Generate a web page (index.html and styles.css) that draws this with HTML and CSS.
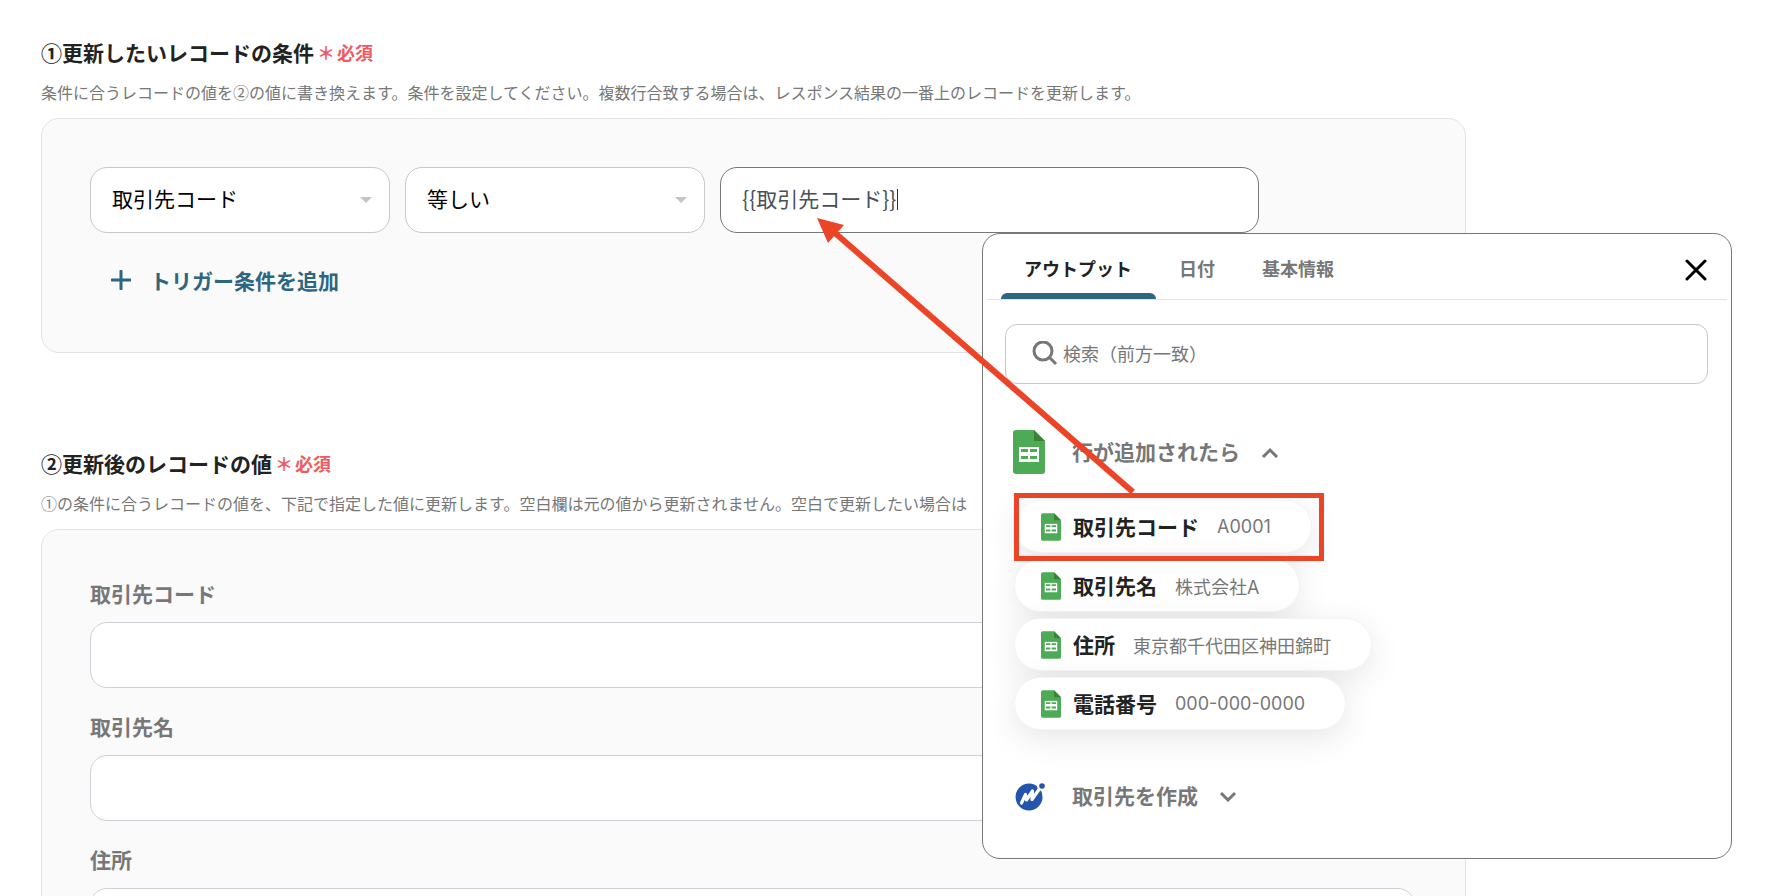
FILE: index.html
```
<!DOCTYPE html>
<html lang="ja">
<head>
  <meta charset="UTF-8">
  <title>レコードを更新する</title>
  <link rel="stylesheet" href="styles.css">
</head>
<body>

  <svg class="symbols" aria-hidden="true">
    <symbol id="sheet" viewBox="0 0 32 44">
      <path d="M3 0h18l11 11v30a3 3 0 0 1-3 3H3a3 3 0 0 1-3-3V3a3 3 0 0 1 3-3z" fill="#4eab55"/>
      <path d="M21 0l11 11H21z" fill="#3b8239"/>
      <path d="M6 17h20v15H6z" fill="#fff"/>
      <path d="M8 19h7v3H8zM17 19h7v3h-7zM8 26h7v3H8zM17 26h7v3h-7z" fill="#4eab55"/>
    </symbol>
  </svg>

  <main class="page">
    <section class="section">
      <h2>①更新したいレコードの条件<span class="required"><span>＊</span>必須</span></h2>
      <p class="description">条件に合うレコードの値を②の値に書き換えます。条件を設定してください。複数行合致する場合は、レスポンス結果の一番上のレコードを更新します。</p>
      <div class="panel">
        <div class="condition">
          <div class="select">
            <select aria-label="項目">
              <option>取引先コード</option>
            </select>
          </div>
          <div class="select">
            <select aria-label="条件">
              <option>等しい</option>
            </select>
          </div>
          <div class="value">
            <input type="text" aria-label="値" value="{{取引先コード}}">
            <span class="caret"></span>

            <div class="popup">
              <div class="tabs">
                <button type="button" class="tab active">アウトプット</button>
                <button type="button" class="tab">日付</button>
                <button type="button" class="tab">基本情報</button>
                <button type="button" class="close" aria-label="閉じる">
                  <svg width="22" height="22" viewBox="0 0 22 22"><path d="M2 2l18 18M20 2L2 20" stroke="#000" stroke-width="3" stroke-linecap="round"/></svg>
                </button>
              </div>

              <label class="search">
                <svg width="26" height="26" viewBox="0 0 26 26" fill="none" stroke="#777" stroke-width="3"><circle cx="11" cy="10" r="9"/><path d="M17 16l7 7"/></svg>
                <input type="text" aria-label="検索" placeholder="検索（前方一致）">
              </label>

              <button type="button" class="group">
                <svg class="group-icon" width="32" height="44"><use href="#sheet"/></svg>
                <span>行が追加されたら</span>
                <svg width="18" height="12" viewBox="0 0 18 12" fill="none" stroke="#777" stroke-width="3"><path d="M2 11l7-7 7 7"/></svg>
              </button>

              <div class="chips">
                <button type="button" class="chip"><svg width="20" height="28"><use href="#sheet"/></svg><b>取引先コード</b><span>A0001</span></button>
                <button type="button" class="chip"><svg width="20" height="28"><use href="#sheet"/></svg><b>取引先名</b><span>株式会社A</span></button>
                <button type="button" class="chip"><svg width="20" height="28"><use href="#sheet"/></svg><b>住所</b><span>東京都千代田区神田錦町</span></button>
                <button type="button" class="chip"><svg width="20" height="28"><use href="#sheet"/></svg><b>電話番号</b><span>000-000-0000</span></button>
              </div>

              <button type="button" class="group">
                <svg class="group-icon" width="32" height="30" viewBox="0 0 32 30">
                  <circle cx="16" cy="16" r="13.5" fill="#2355ad"/>
                  <circle cx="29" cy="5" r="5" fill="#fff"/>
                  <circle cx="29" cy="5" r="2.8" fill="#2355ad"/>
                  <path d="M8.500 22l4-8.500 1 5.500 6-9-.5 8.500 7-10" fill="none" stroke="#fff" stroke-width="3.2" stroke-linecap="round" stroke-linejoin="round"/>
                </svg>
                <span>取引先を作成</span>
                <svg width="18" height="12" viewBox="0 0 18 12" fill="none" stroke="#777" stroke-width="3"><path d="M2 3l7 7 7-7"/></svg>
              </button>

              <!-- arrow from the first output to the value field -->
              <svg class="guide" width="510" height="346" viewBox="0 0 510 346">
                <path d="M20 17L318 276" stroke="#ec4427" stroke-width="6"/>
                <path d="M2 2l27 7-16 18z" fill="#ec4427"/>
                <rect x="201.500" y="279.500" width="305" height="63" fill="none" stroke="#ec4427" stroke-width="5"/>
              </svg>
            </div>
          </div>
        </div>
        <button type="button" class="add">
          <svg width="20" height="20" viewBox="0 0 20 20"><path d="M10 1v18M1 10h18" stroke="#2d6680" stroke-width="3" stroke-linecap="round"/></svg>
          トリガー条件を追加
        </button>
      </div>
    </section>

    <section class="section">
      <h2>②更新後のレコードの値<span class="required"><span>＊</span>必須</span></h2>
      <p class="description">①の条件に合うレコードの値を、下記で指定した値に更新します。空白欄は元の値から更新されません。空白で更新したい場合は</p>
      <div class="panel">
        <div class="field">
          <label for="code">取引先コード</label>
          <input type="text" id="code">
        </div>
        <div class="field">
          <label for="name">取引先名</label>
          <input type="text" id="name">
        </div>
        <div class="field">
          <label for="address">住所</label>
          <input type="text" id="address">
        </div>
      </div>
    </section>
  </main>

</body>
</html>
```
FILE: styles.css
```
* { box-sizing: border-box; }
body { margin: 0; height: 100vh; overflow: hidden; background: #fff; color: #222; font-family: "Noto Sans CJK JP", sans-serif; }
button, input, select { font-family: inherit; }
button { border: none; background: none; padding: 0; cursor: pointer; }
svg { flex: none; }
.symbols { position: absolute; width: 0; height: 0; }

.page { padding: 36px 300px 0 41px; }
.section { margin-bottom: 94px; }
h2 { margin: 0 0 12px; font-size: 21px; line-height: 32px; font-weight: bold; display: flex; }
.required { display: flex; gap: 2px; margin-left: 3px; font-size: 18px; color: #ef5b62; }
.description { margin: 0 0 14px; font-size: 16px; line-height: 24px; color: #777; white-space: nowrap; }
.panel { padding: 48px 50px 56px 48px; border: 1px solid #e1e3e8; border-radius: 18px; background: #fafafa; }

.condition { display: flex; gap: 15px; }
.select { position: relative; flex: 0 1 300px; }
.select::after { content: ""; position: absolute; right: 18px; top: 30px; border: 6px solid transparent; border-top-color: #c4c4c4; border-bottom: none; pointer-events: none; }
select, .value > input, .field input { display: block; width: 100%; height: 66px; padding: 0 21px 4px; border: 1px solid #c8c8c8; border-radius: 17px; background: #fff; font-size: 21px; color: #000; appearance: none; }
.value { position: relative; flex: 0 1 539px; }
.value > input { border-color: #777; color: #495057; outline: none; }
.caret { position: absolute; left: 177px; top: 22px; width: 1px; height: 21px; background: #333; }

.add { display: flex; align-items: center; gap: 19px; margin-top: 31px; padding-left: 21px; font-size: 21px; line-height: 32px; font-weight: bold; color: #2d6680; }

.field { margin-bottom: 23px; }
.field label { display: block; margin-bottom: 14px; font-size: 21px; line-height: 30px; font-weight: bold; color: #777; }
.field input { border-color: #ced2d8; }

.popup { position: absolute; z-index: 1; top: 100%; left: 262px; width: 750px; padding: 0 4px 40px; border: 1px solid #777; border-radius: 18px; background: #fff; }
.tabs { display: flex; height: 66px; padding-left: 14px; border-bottom: 1px solid #e2e2e2; }
.tab { position: relative; padding: 2px 24px 0 23px; font-size: 18px; font-weight: bold; color: #777; }
.tab.active { color: #222; }
.tab.active::after { content: ""; position: absolute; left: 0; right: 0; bottom: 0; height: 6px; border-radius: 6px 6px 0 0; background: #2d6680; }
.close { display: flex; align-items: center; margin: 6px 20px 0 auto; }

.search { display: flex; align-items: center; gap: 3px; height: 60px; margin: 24px 19px 46px 18px; padding-left: 26px; border: 1px solid #c8c8c8; border-radius: 12px; }
.search input { flex: 1; border: none; outline: none; padding: 0 2px 2px; font-size: 18px; }
.search input::placeholder { color: #777; opacity: 1; }

.group { display: flex; align-items: center; gap: 21px; margin-left: 26px; height: 44px; font-size: 21px; font-weight: bold; color: #777; }
.group span { padding-bottom: 3px; }
.group-icon { margin-right: 6px; }

.chips { display: flex; flex-direction: column; align-items: flex-start; gap: 7px; margin: 26px 0 44px 27px; }
.chip { display: flex; align-items: center; height: 53px; padding: 0 40px 0 26px; border: 1px solid #f4f4f4; border-radius: 27px; background: #fff; box-shadow: 0 8px 32px rgba(0, 0, 0, 0.1); }
.chip + .chip { margin-top: -1px; }
.chip b { margin: 0 18px 0 12px; padding-bottom: 2px; font-size: 21px; color: #222; }
.chip span { font-family: Inter, "Noto Sans CJK JP", sans-serif; font-size: 18px; color: #777; }

.guide { position: absolute; left: -168px; top: -18px; pointer-events: none; }
```
